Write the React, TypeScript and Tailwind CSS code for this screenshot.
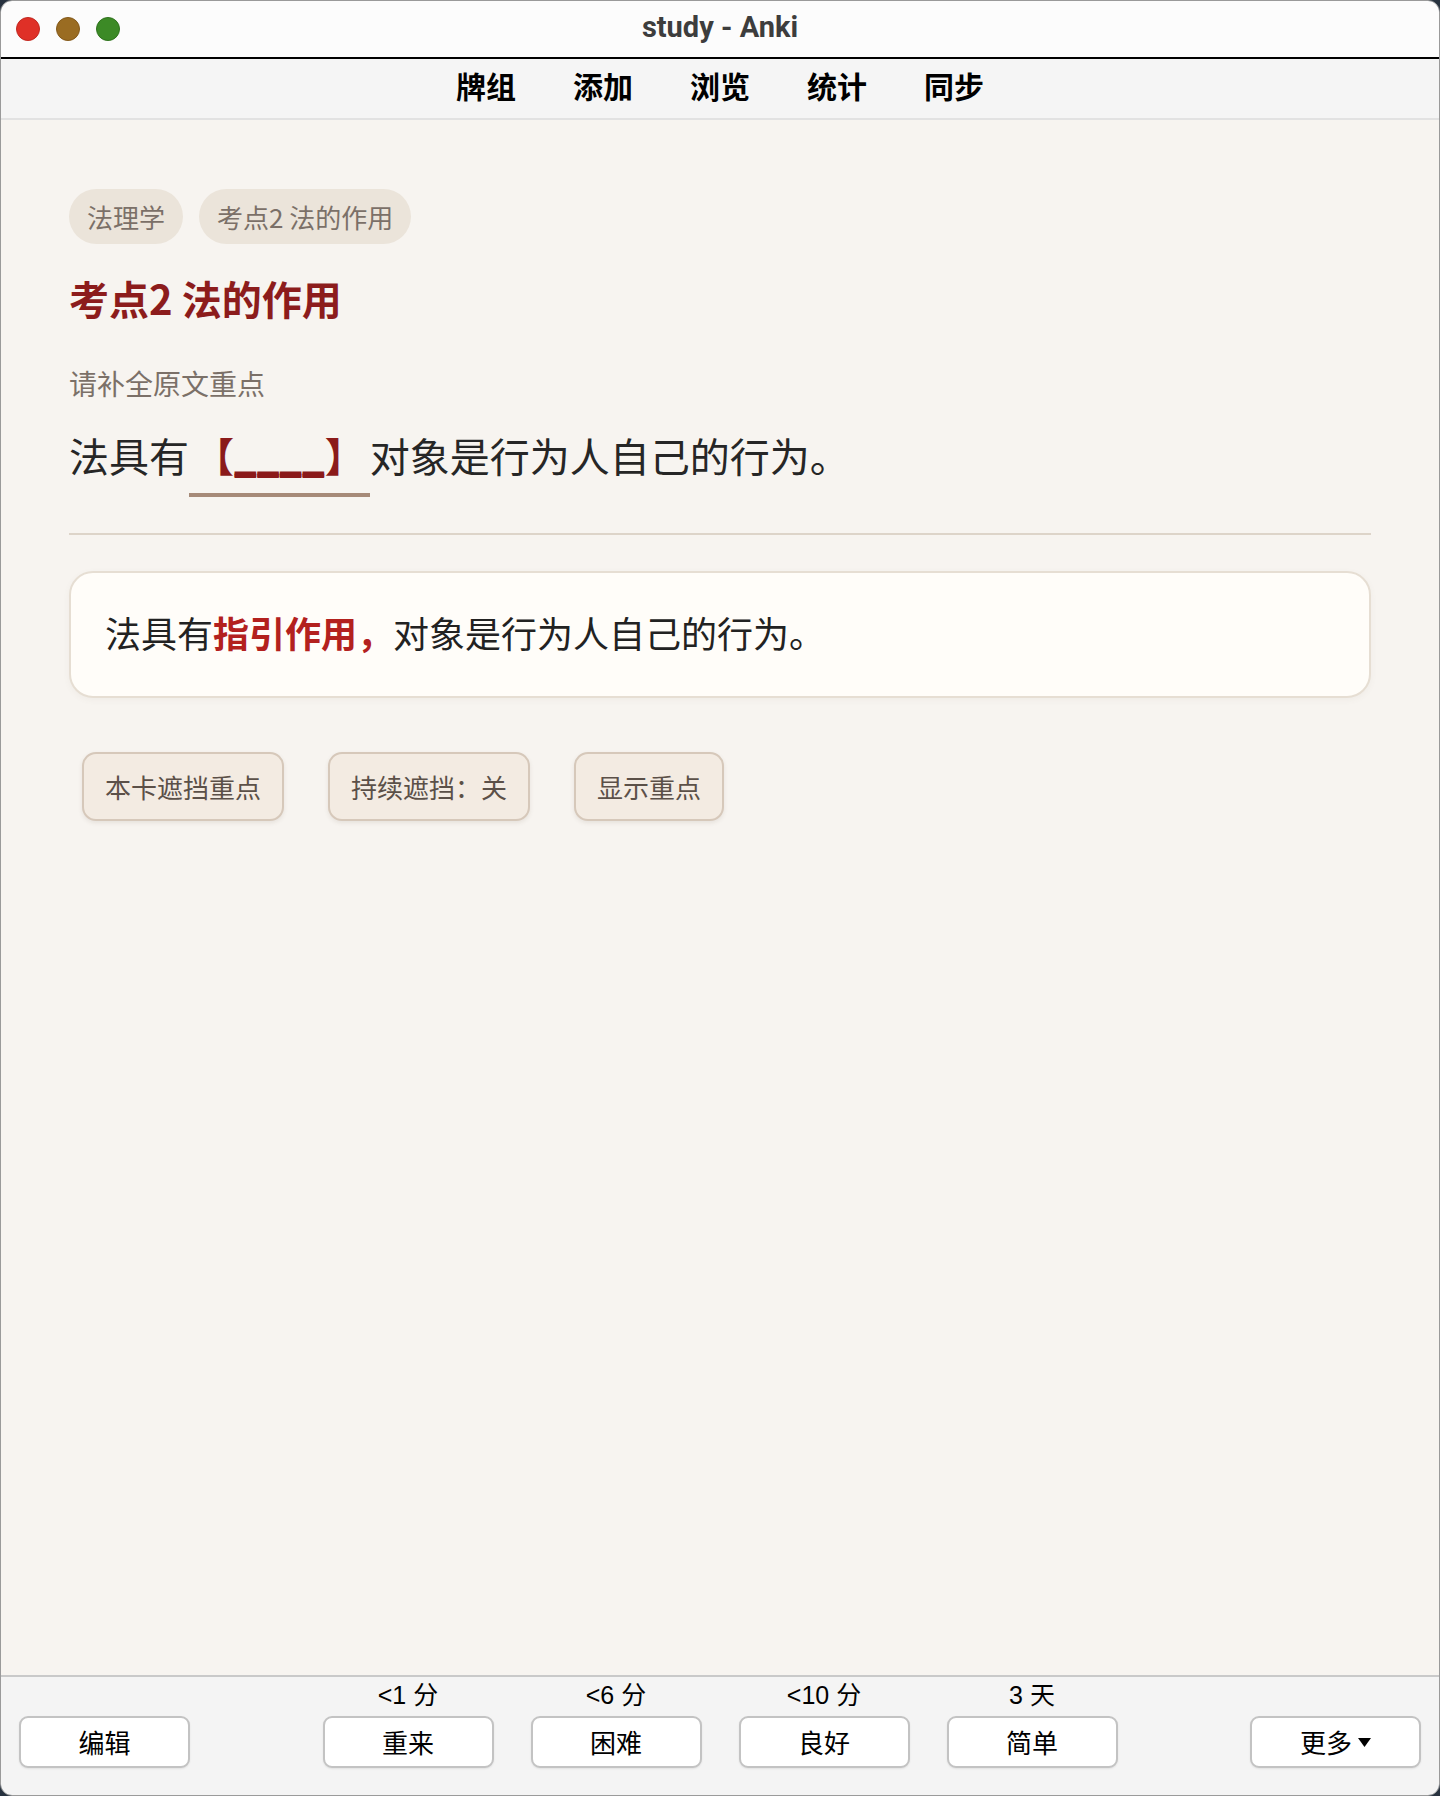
import React from "react";

function Light({ color, ring }: { color: string; ring: string }) {
  return <span className={`w-[23.5px] h-[23.5px] rounded-full ${color} ${ring} border`} />;
}

function BottomButton({ children }: { children: React.ReactNode }) {
  return (
    <button className="w-[171px] h-[52px] bg-white border-2 border-[#c3c3c3] rounded-[9px] shadow-[0_1px_2px_rgba(0,0,0,0.08)] text-[26px] leading-none text-black flex items-center justify-center">
      {children}
    </button>
  );
}

export default function App() {
  const tabs = ["牌组", "添加", "浏览", "统计", "同步"];
  const answers = [
    { label: "<1 分", text: "重来" },
    { label: "<6 分", text: "困难" },
    { label: "<10 分", text: "良好" },
    { label: "3 天", text: "简单" },
  ];
  return (
    <div className="w-[1440px] h-[1796px] bg-[#27323f]">
      <div className="w-full h-full flex flex-col rounded-[12px] overflow-hidden border border-[#9a9a9a] font-['Noto_Sans_CJK_SC',sans-serif]">
        {/* title bar */}
        <div className="h-[56px] shrink-0 bg-[#fcfcfc] grid grid-cols-[1fr_auto_1fr] items-center pb-[3px]">
          <div className="flex items-center gap-[16.5px] pl-[15px] pt-[3px]">
            <Light color="bg-[#df3027]" ring="border-[#c22820]" />
            <Light color="bg-[#9a6c22]" ring="border-[#84591a]" />
            <Light color="bg-[#3c8a26]" ring="border-[#2f731d]" />
          </div>
          <div className="font-['Roboto',sans-serif] font-bold text-[29px] leading-none text-[#3d3d3d]">
            study - Anki
          </div>
          <div />
        </div>
        <div className="h-[2px] shrink-0 bg-black" />
        {/* toolbar */}
        <div className="h-[61px] shrink-0 bg-[#f5f5f5] border-b-2 border-[#e2e2e2] flex items-center justify-center gap-[57px] pb-[8px]">
          {tabs.map((t) => (
            <span key={t} className="text-[30px] leading-none font-bold text-black">
              {t}
            </span>
          ))}
        </div>
        {/* content */}
        <main className="flex-1 bg-[#f7f4f0] px-[68px] pt-[69px]">
          <div className="flex gap-[16px]">
            <span className="h-[55px] px-[18px] rounded-full bg-[#ebe4da] text-[26px] text-[#7b7068] flex items-center">
              法理学
            </span>
            <span className="h-[55px] px-[18px] rounded-full bg-[#ebe4da] text-[26px] text-[#7b7068] flex items-center">
              考点2 法的作用
            </span>
          </div>
          <h1 className="mt-[31px] text-[40px] leading-[46px] font-bold text-[#8c1c1c]">考点2 法的作用</h1>
          <div className="mt-[42px] text-[28px] leading-[40px] text-[#7b7068]">请补全原文重点</div>
          <div className="mt-[22px] text-[40px] leading-[60px] text-[#262626]">
            法具有
            <span className="inline-block px-[5px] pb-[8px] border-b-[4px] border-[#a68a78] font-bold text-[#8b1a1a]">
              【
              <span className="[text-shadow:0_-1.5px_0_#8b1a1a,0_-3px_0_#8b1a1a]">____</span>
              】
            </span>
            对象是行为人自己的行为。
          </div>
          <div className="mt-[36px] h-[2px] bg-[#ddd4c9]" />
          <div className="mt-[36px] rounded-[24px] border-2 border-[#e6ded3] bg-[#fffdf9] shadow-[0_2px_6px_rgba(120,100,80,0.06)] px-[34px] pt-[32px] pb-[36px] text-[36px] leading-[55px] text-[#222222]">
            法具有<span className="font-bold text-[#b3211e]">指引作用，</span>对象是行为人自己的行为。
          </div>
          <div className="mt-[54px] pl-[13px] flex gap-[44px]">
            {["本卡遮挡重点", "持续遮挡：关", "显示重点"].map((b) => (
              <button
                key={b}
                className="h-[69px] px-[21px] rounded-[14px] border-2 border-[#d6c8ba] bg-[#f3ebe2] shadow-[0_2px_4px_rgba(90,70,50,0.1)] text-[26px] leading-none text-[#5b5048]"
              >
                {b}
              </button>
            ))}
          </div>
        </main>
        {/* bottom bar */}
        <footer className="h-[120px] shrink-0 bg-[#f4f4f4] border-t-2 border-[#c9c9c9] grid grid-cols-[1fr_auto_1fr] px-[18px]">
          <div className="pt-[39px] flex justify-start">
            <BottomButton>编辑</BottomButton>
          </div>
          <div className="flex gap-[37px] pt-[3px]">
            {answers.map((a) => (
              <div key={a.text} className="flex flex-col items-center">
                <div className="h-[30px] leading-[30px] text-[25px] text-black font-['Liberation_Sans','Noto_Sans_CJK_SC',sans-serif]">
                  {a.label}
                </div>
                <div className="mt-[6px]">
                  <BottomButton>{a.text}</BottomButton>
                </div>
              </div>
            ))}
          </div>
          <div className="pt-[39px] flex justify-end">
            <BottomButton>
              <span>更多</span>
              <svg className="ml-[6px]" width="13" height="9" viewBox="0 0 13 9">
                <path d="M0 0 H13 L6.5 9 Z" fill="#000" />
              </svg>
            </BottomButton>
          </div>
        </footer>
      </div>
    </div>
  );
}
